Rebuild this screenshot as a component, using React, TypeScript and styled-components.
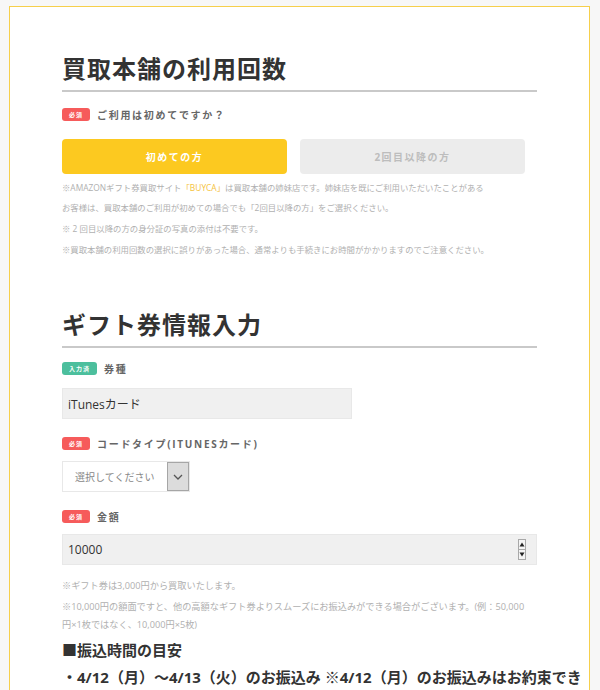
import React from 'react'
import styled, { createGlobalStyle } from 'styled-components'

const GlobalStyle = createGlobalStyle`
  html, body {
    margin: 0;
    padding: 0;
    background: #f7f7f7;
  }
  body {
    font-family: "Open Sans", "Noto Sans CJK JP", sans-serif;
    color: #333;
  }
`

const Page = styled.div`
  padding: 6px 0 0 9px;
`

const Card = styled.div`
  box-sizing: border-box;
  width: 581px;
  min-height: 700px;
  padding: 0 52px 40px;
  background: #fff;
  border: 1px solid #f6cf4b;
  border-bottom: none;
`

const Heading = styled.h2<{ $mt: number }>`
  margin: ${p => p.$mt}px 0 0;
  padding: 0 0 4px;
  font-size: 24px;
  line-height: 34px;
  letter-spacing: 1px;
  font-weight: 700;
  color: #333;
  border-bottom: 2px solid #c9c9c9;
`

const LabelRow = styled.div<{ $mt: number }>`
  display: flex;
  align-items: center;
  gap: 7px;
  height: 16px;
  margin-top: ${p => p.$mt}px;
`

const Badge = styled.span<{ $tone: 'red' | 'green' }>`
  display: inline-flex;
  align-items: center;
  justify-content: center;
  height: 13px;
  padding: 0 7px;
  border-radius: 3px;
  background: ${p => (p.$tone === 'red' ? '#f65b5b' : '#4cbf9d')};
  color: #fff;
  font-size: 6px;
  font-weight: 700;
  letter-spacing: 1px;
`

const Label = styled.span`
  font-size: 10px;
  font-weight: 700;
  letter-spacing: 1.7px;
  color: #666;
`

const ChoiceRow = styled.div`
  display: grid;
  grid-template-columns: 225px 225px;
  gap: 13px;
  margin-top: 17px;
`

const Choice = styled.button<{ $active?: boolean }>`
  height: 35px;
  border: none;
  border-radius: 4px;
  background: ${p => (p.$active ? '#fcc920' : '#ececec')};
  color: ${p => (p.$active ? '#fff' : '#bdbdbd')};
  font-family: inherit;
  font-size: 10px;
  font-weight: 700;
  letter-spacing: 1.5px;
  cursor: pointer;
`

const Notes = styled.div<{ $mt: number; $size: number; $lh: number; $gap: number }>`
  margin-top: ${p => p.$mt}px;
  font-size: ${p => p.$size}px;
  line-height: ${p => p.$lh}px;
  color: #b0b0b0;
  p {
    margin: 0 0 ${p => p.$gap}px;
    white-space: nowrap;
  }
`

const Accent = styled.span`
  color: #f5c23a;
`

const TextBox = styled.div<{ $mt: number; $w?: number }>`
  box-sizing: border-box;
  display: flex;
  align-items: center;
  justify-content: space-between;
  width: ${p => (p.$w ? `${p.$w}px` : '100%')};
  height: 31px;
  margin-top: ${p => p.$mt}px;
  padding: 0 10px 0 5px;
  background: #f0f0f0;
  border: 1px solid #e8e8e8;
  font-size: 12px;
  color: #333;
`

const SelectBox = styled.div`
  box-sizing: border-box;
  display: flex;
  align-items: center;
  justify-content: space-between;
  width: 128px;
  height: 31px;
  margin-top: 10px;
  padding-left: 12px;
  background: #fff;
  border: 1px solid #e8e8e8;
  font-size: 10px;
  color: #888;
`

const SelectArrow = styled.span`
  box-sizing: border-box;
  display: flex;
  align-items: center;
  justify-content: center;
  width: 22px;
  height: 29px;
  background: #dcdcdc;
  border: 1px solid #a6a6a6;
`

const SubHead = styled.div`
  margin-top: 4px;
  font-size: 15px;
  line-height: 24px;
  font-weight: 700;
  color: #333;
`

const Bullet = styled.div`
  margin-top: 3px;
  font-size: 15px;
  line-height: 24px;
  font-weight: 700;
  color: #333;
  white-space: nowrap;
`

const Spinner = () => (
  <svg width="8" height="21" viewBox="0 0 8 21">
    <rect x="0.5" y="0.5" width="7" height="20" fill="#f4f4f4" stroke="#a8a8a8" />
    <line x1="0.5" y1="10.5" x2="7.5" y2="10.5" stroke="#a8a8a8" />
    <path d="M4 3.5 L6.5 7.5 H1.5 Z" fill="#222" />
    <path d="M4 17.5 L6.5 13.5 H1.5 Z" fill="#222" />
  </svg>
)

const Chevron = () => (
  <svg width="10" height="6" viewBox="0 0 10 6">
    <polyline points="1,1 5,5 9,1" fill="none" stroke="#555" strokeWidth="1.3" />
  </svg>
)

const App: React.FC = () => {
  return (
    <Page>
      <GlobalStyle />
      <Card>
        {/* 利用回数 */}
        <Heading $mt={45}>買取本舗の利用回数</Heading>
        <LabelRow $mt={14}>
          <Badge $tone='red'>必須</Badge>
          <Label>ご利用は初めてですか？</Label>
        </LabelRow>
        <ChoiceRow>
          <Choice $active>初めての方</Choice>
          <Choice>2回目以降の方</Choice>
        </ChoiceRow>
        <Notes $mt={4} $size={8.4} $lh={20} $gap={1}>
          <p>
            ※AMAZONギフト券買取サイト<Accent>「BUYCA」</Accent>は買取本舗の姉妹店です。姉妹店を既にご利用いただいたことがある
            <br />
            お客様は、買取本舗のご利用が初めての場合でも「2回目以降の方」をご選択ください。
          </p>
          <p>※ 2 回目以降の方の身分証の写真の添付は不要です。</p>
          <p>※買取本舗の利用回数の選択に誤りがあった場合、通常よりも手続きにお時間がかかりますのでご注意ください。</p>
        </Notes>

        {/* ギフト券情報 */}
        <Heading $mt={48}>ギフト券情報入力</Heading>
        <LabelRow $mt={12}>
          <Badge $tone='green'>入力済</Badge>
          <Label>券種</Label>
        </LabelRow>
        <TextBox $mt={12} $w={290}>iTunesカード</TextBox>

        <LabelRow $mt={16}>
          <Badge $tone='red'>必須</Badge>
          <Label>コードタイプ(ITUNESカード)</Label>
        </LabelRow>
        <SelectBox>
          選択してください
          <SelectArrow><Chevron /></SelectArrow>
        </SelectBox>

        <LabelRow $mt={16}>
          <Badge $tone='red'>必須</Badge>
          <Label>金額</Label>
        </LabelRow>
        <TextBox $mt={10}>
          10000
          <Spinner />
        </TextBox>

        <Notes $mt={12} $size={9.2} $lh={18} $gap={3}>
          <p>※ギフト券は3,000円から買取いたします。</p>
          <p>
            ※10,000円の額面ですと、他の高額なギフト券よりスムーズにお振込みができる場合がございます。(例：50,000
            <br />
            円×1枚ではなく、10,000円×5枚)
          </p>
        </Notes>

        <SubHead>■振込時間の目安</SubHead>
        <Bullet>・4/12（月）～4/13（火）のお振込み ※4/12（月）のお振込みはお約束でき</Bullet>
      </Card>
    </Page>
  )
}

export default App
